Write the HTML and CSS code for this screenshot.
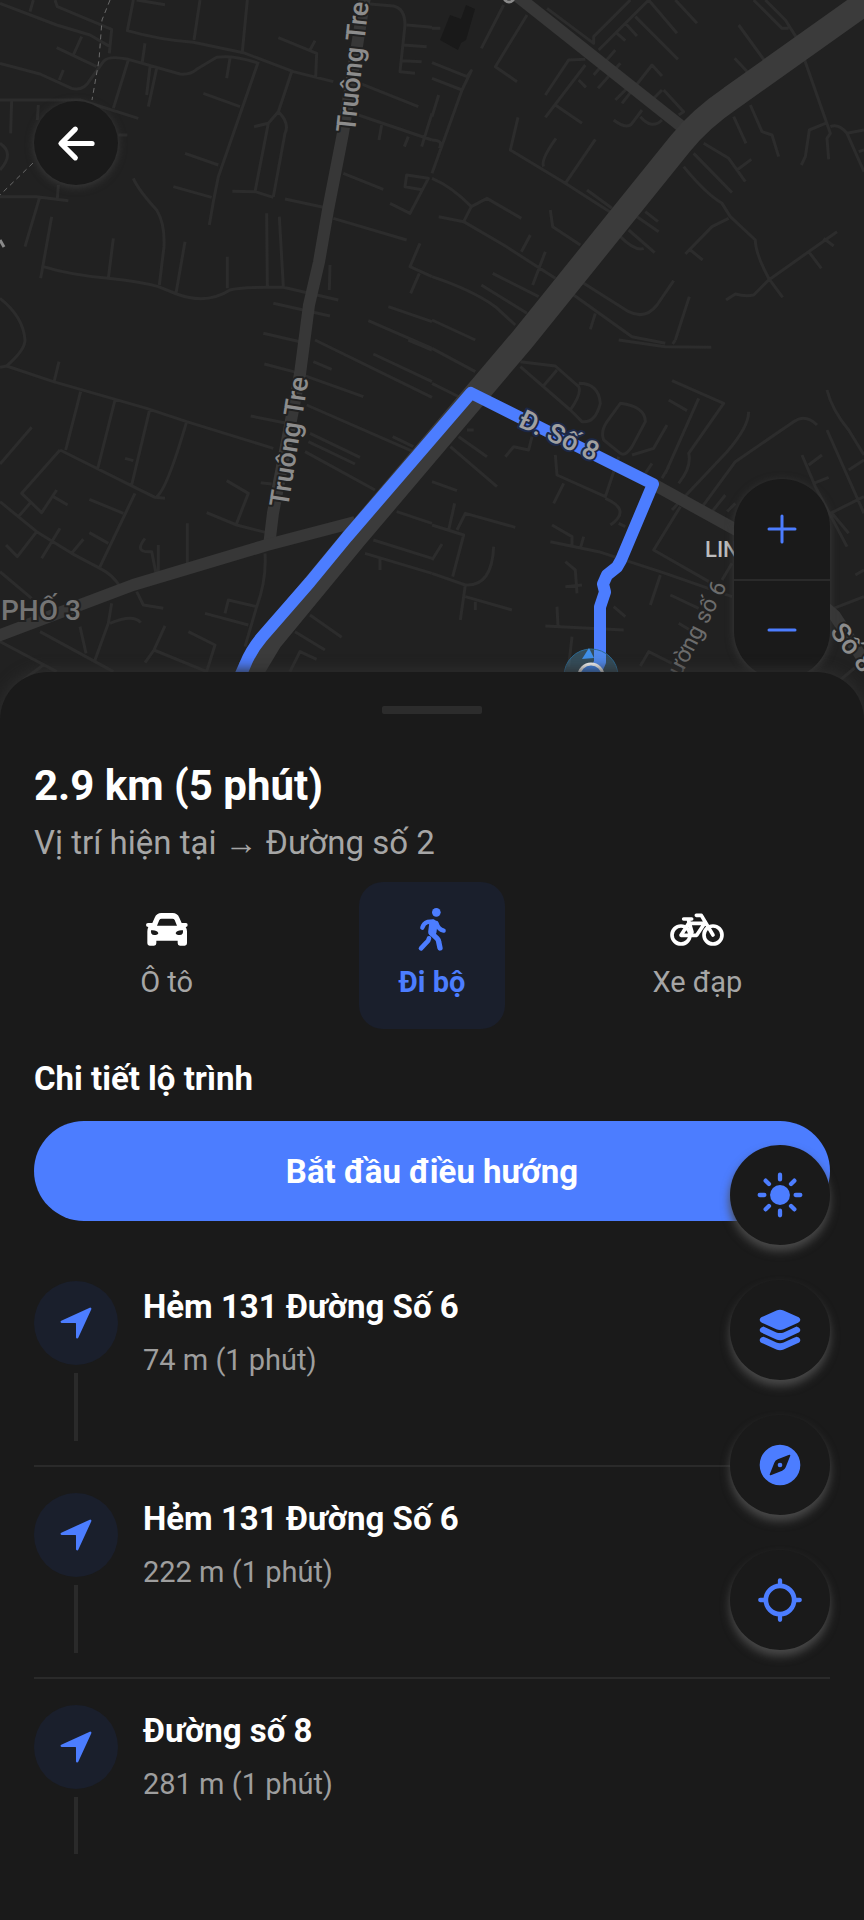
FILE: index.html
```html
<!DOCTYPE html>
<html lang="vi">
<head>
<meta charset="utf-8">
<meta name="viewport" content="width=device-width, initial-scale=1">
<title>Chi tiết lộ trình</title>
<link rel="stylesheet" href="styles.css">
</head>
<body>
<svg class="defs" aria-hidden="true">
  <symbol id="navigate" viewBox="0 0 512 512"><path fill="currentColor" d="M272 464a16 16 0 01-16-16.42V264.13a8 8 0 00-8-8H64.41a16.31 16.31 0 01-15.49-10.65 16 16 0 018.41-19.87l384-176.15a16 16 0 0121.22 21.19l-176 384A16 16 0 01272 464z"/></symbol>
</svg>
<main class="app">
  <section class="map" aria-label="Bản đồ">
    <svg class="map-canvas" viewBox="0 0 864 740" preserveAspectRatio="xMidYMin slice">
      <rect class="land" width="864" height="740"/>
      <g class="minor" transform="scale(.33333)">
        <path d="M0 10L170 75L270 105L330 140M100 0L90 35M165 0L172 20L335 88L328 160M170 143L290 200M245 110L220 165M0 190L120 222L215 265Q250 275 270 240L310 185Q325 165 385 178L540 222Q570 225 590 208L650 172Q700 165 770 188M190 210L178 240M400 0L382 92Q480 120 580 127L730 158L880 215L1000 245M600 0L582 120M742 0L727 155M410 0L495 14M435 130L427 185M385 180L340 325M450 200L440 285M470 205L445 320M690 175L680 235M775 185L655 530Q640 600 628 675M875 215L835 335L805 370L765 575M835 335Q870 370 855 400L820 590M805 370L762 380M610 280L720 320M555 460L655 495M520 560L635 592M697 574L765 575L820 592M855 597L970 622M835 113L950 160L947 232M945 122L930 150M0 300L240 300L415 355M35 300L32 400M115 315L112 360M355 405L382 405M0 430Q45 460 0 510M0 590L110 590L205 602M175 555L172 595M118 595L75 740M155 650L122 835M130 800Q210 825 325 835Q420 845 475 860L530 882Q620 915 690 870Q720 860 850 862L1015 900M340 715L325 835M400 535Q415 570 470 630Q495 670 492 740L478 855M555 725L528 880M682 770L682 865M800 640L802 860M838 650L850 860M820 910L990 948M790 1000L900 1025M0 895Q70 950 75 1020M1110 12L1180 18Q1215 25 1215 75L1200 215L1245 220M1220 75L1296 82M1210 135L1280 140M1205 182L1265 185M1080 250L1255 320M1075 345L1296 420M1145 375L1137 420M1225 410L1213 440M1296 340L1265 440M1030 520L1150 568M1000 655L1220 720M1170 610L1230 640L1285 535L1220 525L1215 560L1270 570M1260 730L1230 800L1296 830M1258 820L1232 880M990 795L988 870M1165 920L1296 965M1105 962L1296 1045"/>
      </g>
      <g class="minor" transform="translate(432 0) scale(.33333)">
        <path d="M215 15L148 145M285 45L190 200L255 245M0 188L105 230L118 212L90 270L0 235M90 270L0 520M0 420Q35 420 22 445M20 285L0 350M0 85L25 85M258 352L235 450L400 550L540 640M372 415Q325 480 335 500M490 418L400 550M345 25L485 130L485 110L595 0M500 150L650 0L735 100M610 50L738 178M730 0L795 70M580 70L615 108M555 100L580 122M460 178L410 180L340 285M460 195L340 352M370 315L450 370M440 240L462 262M550 150L485 225M565 190L498 265M600 250L550 300M690 228L660 195L570 310M690 270L660 300M695 270L755 335L740 345M545 360Q585 390 600 370L630 330M625 350Q660 390 690 360M965 0L1050 85L1070 85M1000 0L1060 60L1095 115L1195 400L1185 415L1190 478M920 75L1000 185M908 175L950 220M955 315L990 395L1020 405L1040 470M905 350L942 430M815 430L890 475L940 545M915 510L958 478M785 460L900 578M755 500Q820 580 870 610L895 650L970 720Q970 760 1010 835L1052 892M890 655L840 680L760 762M775 750L812 780M1215 695L1010 840L965 885Q940 890 910 882L882 900M1175 715L1205 738M1130 755L1168 805M1180 370L1132 390L1120 470L1108 495M1195 380Q1220 370 1245 400L1296 390M1245 400L1296 515M1280 455L1296 450M0 535Q60 560 118 620L95 665M20 650L95 665L215 735L370 835M118 620L165 595L268 655M295 705L268 755M340 755L302 855M182 820L320 890M148 855L285 940M0 830Q120 870 190 920L250 975M0 960L130 1020M355 630L362 680L445 735M465 570L540 625M615 650L680 695M640 635L678 665M590 690L668 758M565 710Q610 755 635 745M455 850L590 935Q640 960 675 915L725 842M425 885L600 1010L700 1030M490 940L475 988M772 890L730 1020"/>
      </g>
      <g class="minor" transform="translate(0 340) scale(.33333)">
        <path d="M75 0Q75 30 20 78L0 82M20 78L160 125L440 205L560 245L820 325M177 65L163 122M242 155L197 330M345 180L292 390M450 205L395 435M560 245Q500 450 470 470M180 330L400 440L465 472L495 475M95 262L0 372M180 330L65 460L125 518L170 450M160 470L203 495M90 490L55 530M0 485L110 575L215 640L300 685Q340 705 360 740M110 575L52 650L18 615M180 565L125 655M250 598L215 640M405 460L300 680M268 478L370 520M268 578L325 610M375 355L400 362M435 595Q400 640 455 635L468 700M475 615L475 695M562 550L562 670M620 518L710 555L800 578M680 422L745 460L710 550M782 428L815 432M793 72L880 95L1090 170M752 228L860 250M940 65L995 88M945 0L1296 172M1120 42L1296 125M1225 0L1296 30M920 195L1240 335M1178 290L1240 320M930 280L1080 352M925 305L1065 372M915 335L1125 450M795 640Q800 720 770 800L735 920M675 820L685 780L770 800M615 820L745 855M410 755L430 795L490 805M0 695L95 775M335 790L325 850L285 960M330 850Q400 820 422 848M240 860L258 940M120 875L340 995M0 905L170 995M130 975L70 1020M495 858L462 930L435 968M462 930L620 995L645 915L565 875M930 825L1025 892M885 875L975 930M870 995L900 935L950 958M1190 515L1296 550M1120 600L1296 655M1095 640L1296 700M1140 655L1140 690"/>
      </g>
      <g class="minor" transform="translate(432 340) scale(.33333)">
        <path d="M0 25L130 95M0 130L100 180M560 0L700 20L838 22M730 0L722 12M265 65L370 78L440 140Q450 160 415 210L265 80M375 90L332 140M440 130Q500 130 505 190Q490 250 450 245L415 210M565 190Q640 200 640 245L600 320Q580 350 565 340L515 300Q505 275 525 245ZM720 122L875 190L770 340Q780 380 740 430M800 175L700 400M710 180L765 212M705 255L665 325L600 345M950 215Q950 260 885 335L720 510M1155 255Q1120 220 1085 245L910 365L800 515M1185 150Q1200 210 1250 270L1296 345M1185 270L1296 520M1110 345L1150 440L1245 620M1130 375L1170 345M1145 430L1190 412M1250 390L1296 360M1195 520L1296 470M1200 520L1250 580M1270 705L1296 690M1205 805L1296 770M880 465L840 515M910 490L885 515M660 370L640 400M710 380L690 415M105 270L125 270M80 290L165 350M55 320L195 440M300 290L290 330L245 320L220 350M370 345L375 405L520 470L560 350M395 430L365 490M520 475Q600 510 535 555M0 425L75 452M68 490L50 570M0 555L95 585L62 710M75 570L100 520L250 562M30 612L0 660M0 700L100 735L85 840M100 735Q180 740 185 620M100 770L240 810M130 785L130 810M360 555L420 590L420 620M455 590L445 625M355 605L500 635L700 700L900 770M745 500L665 630L840 730M685 705L655 795M715 765L800 805M580 560L560 550M400 665L430 690L435 760M400 740L450 735M375 800L378 860M340 858L575 870M420 890L410 980M545 800L580 830M625 978L650 935L720 970M740 850L790 880M900 670L870 720M1225 1020L1296 960"/>
      </g>
      <path class="building" d="M466 5L475 9L466 40L461 43L458 50L440 40L450 15L461 19Z"/>
      <path class="boundary" d="M110 0L102 20L99 60L92 100M33 163L0 195"/>
      <g class="major">
        <path d="M366 -10L343 133L328 210L319 262L309 305L300 374L273 513L269 546"/>
        <path d="M-5 637L133 585L267 545L355 522"/>
        <path d="M512 -8L686 130"/>
        <path d="M653 484L740 532L835 616L870 670"/>
      </g>
      <path class="highway" d="M880 -8L731 98Q700 119 680 144L522 340L355 537L270 640L240 690"/>
      <path class="route" d="M234 690L245 665Q251 650 262 637L310 582L347 537L471 393L653 484L621 560L617 567L607 575L603 584L605 592L600 607L600 662L594 676"/>
      <circle class="halo" cx="591" cy="676" r="27"/>
      <path class="heading" d="M589 648L582 659L594 658Z"/>
      <circle class="here" cx="591" cy="676" r="12"/>
      <circle class="glyph" cx="509" cy="-3" r="5"/>
      <path class="glyph" d="M0 240L4 247"/>
      <g class="road-name">
        <text transform="translate(355 133) rotate(-84)">Truông Tre</text>
        <text transform="translate(288 508) rotate(-81)">Truông Tre</text>
        <text class="on-route" transform="translate(517 426) rotate(25)">Đ. Số 8</text>
        <text transform="translate(829 632) rotate(52)">Số 8</text>
        <text class="lane" text-anchor="end" transform="translate(727 586) rotate(-63)">Đường số 6</text>
      </g>
      <text class="ward" x="1" y="620">PHỐ 3</text>
      <text class="place" x="705" y="557">LIN</text>
    </svg>

    <button class="back" aria-label="Quay lại">
      <svg viewBox="0 0 512 512" class="stroke-icon"><path d="M244 400L100 256L244 112M120 256H412"/></svg>
    </button>

    <div class="zoom">
      <button aria-label="Phóng to"><svg viewBox="0 0 30 30"><path d="M2 15H28M15 2V28"/></svg></button>
      <button aria-label="Thu nhỏ"><svg viewBox="0 0 30 30"><path d="M2 15H28"/></svg></button>
    </div>
  </section>

  <section class="sheet">
    <div class="handle"></div>
    <h1 class="summary">2.9 km (5 phút)</h1>
    <p class="trip">Vị trí hiện tại → Đường số 2</p>

    <div class="modes">
      <button class="mode">
        <svg viewBox="0 0 150 150"><path fill="currentColor" fill-rule="evenodd" d="M31 57L38 41Q44 27 58 27H92Q106 27 112 41L119 57H132Q137 57 137 63Q137 69 131 69Q135 75 135 82V118Q135 125 128 125H114Q107 125 107 118V110H43V118Q43 125 36 125H23Q16 125 16 118V82Q16 75 19 69Q12 69 12 63Q12 57 18 57ZM45 65H105L98 48Q96 44 91 44H59Q54 44 52 48ZM27 79Q25 93 37 93Q48 93 49 87Q44 77 27 79ZM123 79Q125 93 113 93Q102 93 101 87Q106 77 123 79Z"/></svg>
        <span>Ô tô</span>
      </button>
      <button class="mode active" aria-pressed="true">
        <svg viewBox="0 0 150 150"><circle cx="88" cy="25" r="13" fill="currentColor"/><g fill="none" stroke="currentColor" stroke-linecap="round" stroke-linejoin="round"><path stroke-width="13" d="M46 71Q50 58 61 54L78 52"/><path stroke-width="13" d="M88 57Q94 76 110 80"/><path stroke-width="25" d="M79 60L76 84"/><path stroke-width="16" d="M74 88L90 103Q94 107 95 113L99 132"/><path stroke-width="14" d="M66 103Q65 110 58 116L42 133"/></g></svg>
        <span>Đi bộ</span>
      </button>
      <button class="mode">
        <svg viewBox="0 0 150 150"><g fill="none" stroke="currentColor" stroke-width="11" stroke-linecap="round" stroke-linejoin="round"><circle cx="27" cy="93" r="27"/><circle cx="123" cy="93" r="27"/><path d="M73 34H88L123 93M35 45H59M49 47L60 84M50 58H98L74 94H27L50 58"/></g></svg>
        <span>Xe đạp</span>
      </button>
    </div>

    <h2 class="heading-2">Chi tiết lộ trình</h2>
    <button class="start">Bắt đầu điều hướng</button>

    <ol class="steps">
      <li class="step">
        <div class="rail"><span class="badge"><svg><use href="#navigate"/></svg></span><span class="line"></span></div>
        <div class="info"><h3>Hẻm 131 Đường Số 6</h3><p>74 m (1 phút)</p></div>
      </li>
      <li class="step">
        <div class="rail"><span class="badge"><svg><use href="#navigate"/></svg></span><span class="line"></span></div>
        <div class="info"><h3>Hẻm 131 Đường Số 6</h3><p>222 m (1 phút)</p></div>
      </li>
      <li class="step">
        <div class="rail"><span class="badge"><svg><use href="#navigate"/></svg></span><span class="line"></span></div>
        <div class="info"><h3>Đường số 8</h3><p>281 m (1 phút)</p></div>
      </li>
    </ol>
  </section>

  <div class="tools">
    <button aria-label="Chế độ sáng"><svg viewBox="0 0 512 512"><circle cx="256" cy="256" r="102" fill="currentColor"/><path class="ray" d="M256 48V96M256 416V464M403 109L369 143M143 369L109 403M464 256H416M96 256H48M403 403L369 369M143 143L109 109"/></svg></button>
    <button aria-label="Lớp bản đồ"><svg viewBox="0 0 512 512" fill="currentColor"><path d="M256 256c-13.47 0-26.94-2.39-37.44-7.17l-148-67.49C63.79 178.26 48 169.25 48 152.24s15.79-26 22.58-29.12l149.28-68.07c20.57-9.4 51.61-9.4 72.19 0l149.37 68.07c6.79 3.09 22.58 12.1 22.58 29.12s-15.8 26-22.58 29.11l-148 67.48C282.94 253.61 269.47 256 256 256z"/><path id="layer" d="M441.36 226.81L426.27 220l-38.77 17.74-94 43c-10.5 4.8-24 7.19-37.44 7.19s-26.93-2.39-37.42-7.19l-94.07-43L85.79 220l-15.22 6.84C63.79 229.93 48 239 48 256s15.79 26.08 22.56 29.17l148 67.63C229 357.6 242.49 360 256 360s26.94-2.4 37.44-7.19l147.87-67.61c6.81-3.09 22.69-12.11 22.69-29.2s-15.77-26.07-22.64-29.19z"/><use href="#layer" y="104"/></svg></button>
    <button aria-label="La bàn"><svg viewBox="0 0 512 512" fill="currentColor"><path fill-rule="evenodd" d="M256 48a208 208 0 100 416a208 208 0 100-416zM350.67 150.93l-117.2 46.88a64 64 0 00-35.66 35.66l-46.88 117.2a8 8 0 0010.4 10.4l117.2-46.88a64 64 0 0035.66-35.66l46.88-117.2a8 8 0 00-10.4-10.4z"/><circle cx="256" cy="256" r="24"/></svg></button>
    <button aria-label="Vị trí của tôi"><svg viewBox="0 0 512 512"><circle class="ring" cx="256" cy="256" r="145"/><path class="ray" d="M256 96V54M256 416V458M96 256H54M416 256H458"/></svg></button>
  </div>
</main>
</body>
</html>
```
FILE: styles.css
```css
:root {
  --surface: #1a1a1a;
  --line: #2a2a2a;
  --blue: #4c7dff;
  --tint: #1a1f2c;
  --muted: #a6a6a6;
  --edge: 34px;
}

* { box-sizing: border-box; }

body {
  margin: 0;
  background: var(--surface);
  color: #fff;
  font-family: Roboto, "Noto Sans", sans-serif;
}

button {
  margin: 0;
  padding: 0;
  border: 0;
  background: none;
  color: inherit;
  font: inherit;
  cursor: pointer;
}

h1, h2, h3, p, ol { margin: 0; padding: 0; }
svg { display: block; }
.defs { position: absolute; width: 0; height: 0; }

.app {
  position: relative;
  display: flex;
  flex-direction: column;
  height: 100vh;
  overflow: hidden;
}

/* Map */
.map {
  position: relative;
  flex: none;
  height: 35vh;
}

.map-canvas {
  position: absolute;
  top: 0;
  left: 0;
  width: 100%;
  height: calc(100% + 68px);
}

.land { fill: #212121; }
.minor { fill: none; stroke: #2c2c2c; stroke-width: 9; stroke-linejoin: round; }
.building { fill: #191919; }
.boundary { fill: none; stroke: #6a6a6a; stroke-width: 1; stroke-dasharray: 5 4; }
.major { fill: none; stroke: #373737; stroke-width: 12; stroke-linejoin: round; }
.highway { fill: none; stroke: #3b3b3b; stroke-width: 25; }
.route { fill: none; stroke: var(--blue); stroke-width: 12; stroke-linejoin: round; }
.halo { fill: #5aa0c8; fill-opacity: .35; stroke: #2c6a94; stroke-width: 1; }
.heading { fill: #3f8fe8; }
.here { fill: #3d85f0; stroke: #fff; stroke-width: 3; }
.glyph { fill: none; stroke: #8a8a8a; stroke-width: 3; }

.road-name {
  fill: #8c8c8c;
  stroke: #212121;
  stroke-width: 4;
  stroke-linejoin: round;
  paint-order: stroke;
  font-size: 27px;
  font-weight: 500;
}

.on-route { fill: #a0a0a0; stroke: #1c2848; }
.lane { fill: #6c6c6c; font-size: 23px; font-weight: 400; }
.ward { fill: #757575; stroke: #212121; stroke-width: 4; paint-order: stroke; font-size: 28px; font-weight: 500; }
.place { fill: #bdbdbd; font-size: 22px; font-weight: 500; }

.back {
  position: absolute;
  top: 101px;
  left: var(--edge);
  display: grid;
  place-items: center;
  width: 84px;
  height: 84px;
  border-radius: 50%;
  background: var(--surface);
  box-shadow: 0 2px 8px #3a3a3a;
}

.back svg { width: 51px; height: 51px; }

.stroke-icon {
  fill: none;
  stroke: currentColor;
  stroke-width: 52;
  stroke-linecap: round;
  stroke-linejoin: round;
}

.zoom {
  position: absolute;
  right: var(--edge);
  bottom: -7px;
  display: flex;
  flex-direction: column;
  width: 96px;
  border-radius: 48px;
  background: var(--surface);
  box-shadow: 0 2px 8px #3a3a3a;
  color: var(--blue);
}

.zoom button { display: grid; place-items: center; height: 100px; }
.zoom button + button { border-top: 2px solid var(--line); }
.zoom svg { width: 30px; height: 30px; fill: none; stroke: currentColor; stroke-width: 3; stroke-linecap: round; }

/* Bottom sheet */
.sheet {
  position: relative;
  display: flex;
  flex: 1;
  flex-direction: column;
  min-height: 0;
  padding: 34px var(--edge) 66px;
  border-radius: 48px 48px 0 0;
  background: var(--surface);
  box-shadow: 0 -2px 14px #2e2e2e;
}

.handle {
  align-self: center;
  width: 100px;
  height: 8px;
  border-radius: 2px;
  background: #2c2c2c;
}

.summary { margin-top: 47px; font-size: 42px; line-height: 50px; font-weight: 700; }
.trip { margin-top: 12px; color: var(--muted); font-size: 33px; line-height: 40px; }

.modes {
  display: grid;
  grid-template-columns: repeat(3, 1fr);
  justify-items: center;
  margin-top: 19px;
}

.mode {
  display: flex;
  flex-direction: column;
  align-items: center;
  gap: 10px;
  min-width: 146px;
  padding: 22px 20px 29px;
  border-radius: 24px;
}

.mode svg { width: 50px; height: 50px; overflow: visible; }
.mode span { color: var(--muted); font-size: 29px; line-height: 36px; }
.mode.active { background: var(--tint); color: var(--blue); }
.mode.active span { color: inherit; font-weight: 700; }

.heading-2 { margin-top: 30px; font-size: 33px; line-height: 40px; font-weight: 700; }

.start {
  flex: none;
  height: 100px;
  margin-top: 22px;
  border-radius: 50px;
  background: var(--blue);
  font-size: 33px;
  font-weight: 700;
}

.steps {
  flex: 1;
  min-height: 0;
  margin-top: 34px;
  overflow-y: auto;
  scrollbar-width: none;
  list-style: none;
}

.step {
  display: flex;
  gap: 25px;
  padding: 26px 0 24px;
  border-bottom: 2px solid var(--line);
}

.rail { display: flex; flex-direction: column; align-items: center; gap: 8px; }

.badge {
  display: grid;
  place-items: center;
  width: 84px;
  height: 84px;
  border-radius: 50%;
  background: var(--tint);
  color: var(--blue);
}

.badge svg { width: 38px; height: 38px; }
.line { width: 4px; height: 68px; background: #2a2a2a; }

.info { padding-top: 6px; }
.info h3 { font-size: 33px; line-height: 40px; font-weight: 700; }
.info p { margin-top: 15px; color: #9e9e9e; font-size: 29px; line-height: 36px; }

/* Floating map tools */
.tools {
  position: absolute;
  right: var(--edge);
  bottom: 270px;
  display: flex;
  flex-direction: column;
  gap: 35px;
  color: var(--blue);
}

.tools button {
  display: grid;
  place-items: center;
  width: 100px;
  height: 100px;
  border-radius: 50%;
  background: var(--surface);
  box-shadow: 0 6px 10px #4a4a4a;
}

.tools svg { width: 50px; height: 50px; }
.ray { fill: none; stroke: currentColor; stroke-width: 44; stroke-linecap: round; }
.ring { fill: none; stroke: currentColor; stroke-width: 48; }
```
